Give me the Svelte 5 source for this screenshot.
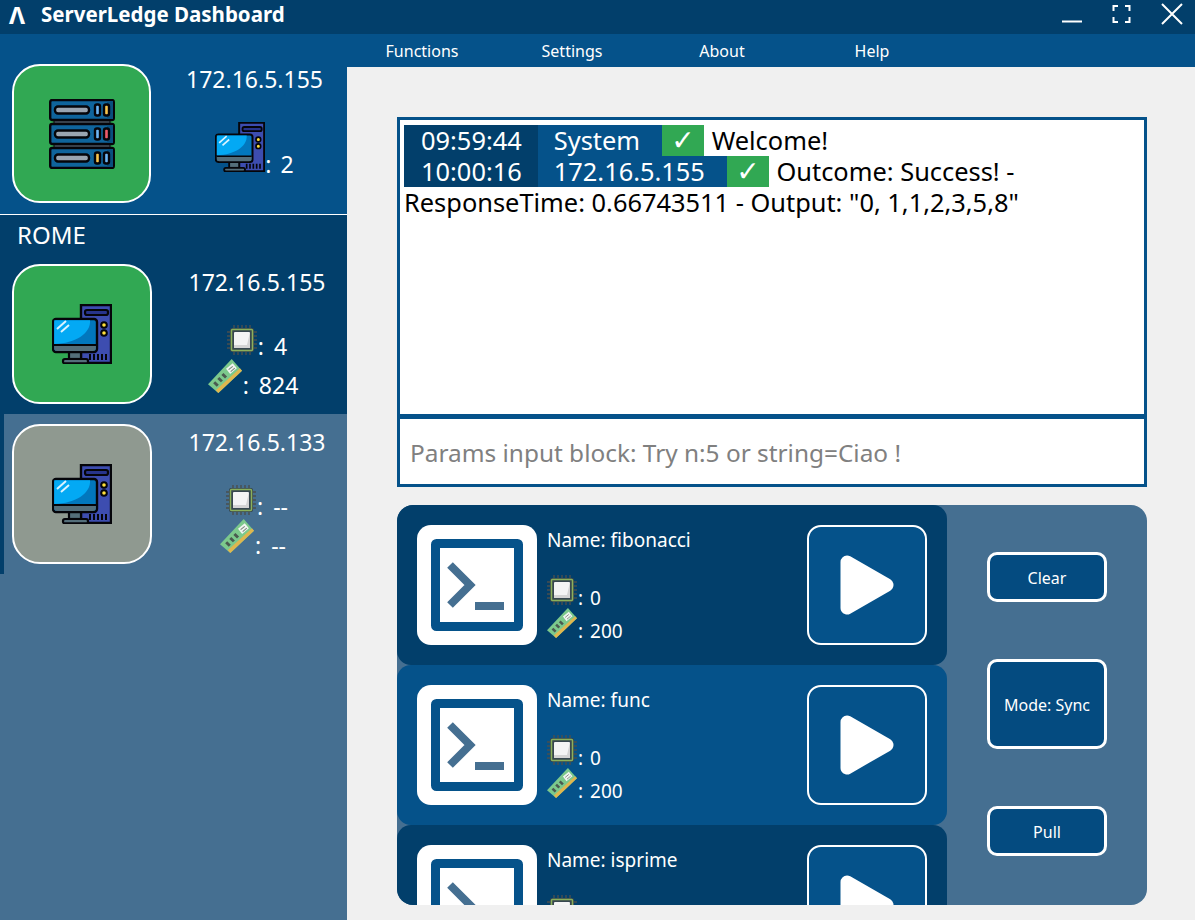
<script lang="ts">
	const menu = ['Functions', 'Settings', 'About', 'Help'];

	const nodes = [
		{ ip: '172.16.5.155', cpu: '4', mem: '824', online: true },
		{ ip: '172.16.5.133', cpu: '--', mem: '--', online: false }
	];

	const functions = [
		{ name: 'fibonacci', cpu: 0, mem: 200 },
		{ name: 'func', cpu: 0, mem: 200 },
		{ name: 'isprime', cpu: 0, mem: 200 }
	];

	const log = [
		{ time: '09:59:44', from: 'System', text: 'Welcome!' },
		{
			time: '10:00:16',
			from: '172.16.5.155',
			text: 'Outcome: Success! - ResponseTime: 0.66743511 - Output: "0, 1,1,2,3,5,8"'
		}
	];

	let params = $state('');
</script>

{#snippet computer(size: number)}
	<svg class="icon" width={size} height={size} viewBox="0 0 60 60" aria-hidden="true">
		<path d="M29 1h30v58H29z" fill="#3d4db0" stroke="#05050a" stroke-width="2.400" />
		<rect x="33" y="6" width="23" height="5" rx="2" fill="#27348b" stroke="#05050a" stroke-width="2.200" />
		<circle cx="52" cy="21" r="2.800" fill="#ffe03b" stroke="#05050a" stroke-width="2" />
		<circle cx="52" cy="29" r="2.800" fill="#ffe03b" stroke="#05050a" stroke-width="2" />
		<path d="M38 50v6M42 50v6M46 50v6M50 50v6M54 50v6" stroke="#05050a" stroke-width="2" />
		<rect x="17" y="47" width="12" height="8" fill="#546e7a" stroke="#05050a" stroke-width="2.200" />
		<rect x="11" y="55" width="25" height="4.400" rx="2" fill="#546e7a" stroke="#05050a" stroke-width="2.200" />
		<rect x="1" y="15" width="44" height="33" rx="3" fill="#0277bd" stroke="#05050a" stroke-width="2.400" />
		<path d="M2.200 16.200h35.800c1 13-14 23-35.800 23.800z" fill="#03a9f4" />
		<path d="M2.200 41h41.600v3a3 3 0 0 1-3 3H5.200a3 3 0 0 1-3-3z" fill="#546e7a" />
		<path d="M2 41h42" stroke="#05050a" stroke-width="1.800" />
		<path d="M5 25l9-8M9 28l8-7" stroke="#d9f3ff" stroke-width="2" />
	</svg>
{/snippet}

{#snippet rack()}
	<svg class="icon" width="66" height="70" viewBox="0 0 66 70" aria-hidden="true">
		<rect x="5" y="20" width="56" height="6" fill="#4a5560" stroke="#05050a" />
		<rect x="5" y="44" width="56" height="6" fill="#4a5560" stroke="#05050a" />
		{#each [{ y: 1, a: '#6db6f5', b: '#f8c54d' }, { y: 25, a: '#6db6f5', b: '#ef5b6c' }, { y: 49, a: '#f8c54d', b: '#6db6f5' }] as u}
			<rect x="1.200" y={u.y} width="63.600" height="20" rx="2" fill="#0f649c" stroke="#05050a" stroke-width="2.400" />
			<path d="M58 {u.y + 1}h6v18h-6z" fill="#0a4f7e" />
			<rect x="6" y={u.y + 6.500} width="34" height="7" rx="3" fill="#9aa5b1" stroke="#05050a" stroke-width="2.400" />
			<rect x="46" y={u.y + 4.500} width="5" height="11" rx="2" fill={u.a} stroke="#05050a" stroke-width="2.400" />
			<rect x="55" y={u.y + 4.500} width="5" height="11" rx="2" fill={u.b} stroke="#05050a" stroke-width="2.400" />
		{/each}
	</svg>
{/snippet}

{#snippet chip()}
	<svg class="icon" width="30" height="30" viewBox="0 0 30 30" aria-hidden="true">
		<path
			d="M0 7h30M0 11h30M0 15h30M0 19h30M0 23h30M7 0v30M11 0v30M15 0v30M19 0v30M23 0v30"
			stroke="#4a4f4f"
			stroke-width="1.400"
		/>
		<rect x="3" y="3" width="24" height="24" rx="2" fill="#37474f" />
		<rect x="4.500" y="4.500" width="21" height="21" rx="1" fill="#37474f" stroke="#8bb05a" stroke-width="1.500" />
		<rect x="7" y="7" width="16" height="16" rx="1" fill="#f4f4f4" />
		<path d="M7 20h13l3-13v16H7z" fill="#d4d4d4" />
	</svg>
{/snippet}

{#snippet ram(size: number)}
	<svg class="icon" width={size} height={size} viewBox="0 0 33 35" preserveAspectRatio="none" aria-hidden="true">
		<path d="M0 26L23 0l10 12-23 23z" fill="#7cc98c" />
		<path d="M33 12L10 35l-2.500-2.800L31 9.500z" fill="#e0b64e" />
		<path d="M17.500 10L24 4.500l4 5-6.500 6z" fill="#f1f4f1" />
		<path d="M20 11l4-3.500M22 13l4-3.500" stroke="#7a8a7a" />
		<path d="M6 24l3.500 3.500M10 19.500l3.500 3.500M14 15.500l3.500 3.500" stroke="#4a5a50" stroke-width="2.800" />
	</svg>
{/snippet}

{#snippet terminal()}
	<svg class="term" width="120" height="120" viewBox="0 0 120 120" aria-hidden="true">
		<rect width="120" height="120" rx="14" fill="#fff" />
		<rect x="18.500" y="18.500" width="83" height="83" rx="1" fill="#fff" stroke="#05528a" stroke-width="9" />
		<path d="M33 40l20 20-20 20" fill="none" stroke="#456f91" stroke-width="8" />
		<rect x="58" y="77" width="29" height="8" fill="#456f91" />
	</svg>
{/snippet}

{#snippet resources(cpu: string | number, mem: string | number, ramSize: number)}
	<div class="res">{@render chip()}<span>: {cpu}</span></div>
	<div class="res mem">{@render ram(ramSize)}<span>: {mem}</span></div>
{/snippet}

<div class="window">
	<header class="titlebar">
		<span class="logo">Λ</span>
		<span class="title">ServerLedge Dashboard</span>
		<div class="controls">
			<svg width="24" height="24" viewBox="0 0 24 24" aria-hidden="true">
				<path d="M2 19.500h20" stroke="#fff" stroke-width="2" />
			</svg>
			<svg width="24" height="24" viewBox="0 0 24 24" aria-hidden="true">
				<path
					d="M8 4H3.500v5M15 4h4.500v5M8 20H3.500v-5M15 20h4.500v-5"
					fill="none"
					stroke="#fff"
					stroke-width="2"
				/>
			</svg>
			<svg width="24" height="24" viewBox="0 0 24 24" aria-hidden="true">
				<path d="M2 2l20 20M22 2L2 22" stroke="#fff" stroke-width="2" />
			</svg>
		</div>
	</header>

	<div class="body">
		<aside class="sidebar">
			<section class="server">
				<div class="tile green">{@render rack()}</div>
				<div class="info">
					<div class="ip">172.16.5.155</div>
					<div class="count">{@render computer(50)}<span>: 2</span></div>
				</div>
			</section>

			<section class="group">
				<h2>ROME</h2>
				{#each nodes as node}
					<div class="node" class:offline={!node.online}>
						<div class="tile" class:green={node.online} class:grey={!node.online}>
							{@render computer(60)}
						</div>
						<div class="info">
							<div class="ip">{node.ip}</div>
							<div class="stats">{@render resources(node.cpu, node.mem, 34)}</div>
						</div>
					</div>
				{/each}
			</section>
		</aside>

		<div class="content">
			<nav class="menu">
				{#each menu as item}
					<span>{item}</span>
				{/each}
			</nav>

			<main>
				<div class="console">
					<div class="log">
						{#each log as entry}
							<div class="entry">
								<span class="time">{entry.time}</span><span class="from">{entry.from}</span><span
									class="check">✓</span
								>
								<span class="msg">{entry.text}</span>
							</div>
						{/each}
					</div>
					<input
						class="params"
						placeholder="Params input block: Try n:5 or string=Ciao !"
						bind:value={params}
					/>
				</div>

				<div class="panel">
					<div class="list">
						{#each functions as fn, i}
							<article class="fn" class:alt={i % 2 === 1}>
								{@render terminal()}
								<div class="fn-info">
									<div class="fn-name">Name: {fn.name}</div>
									{@render resources(fn.cpu, fn.mem, 30)}
								</div>
								<button class="play" aria-label="Run {fn.name}">
									<svg width="54" height="60" viewBox="0 0 54 60" aria-hidden="true">
										<path
											d="M7 7L47 30 7 53z"
											fill="#fff"
											stroke="#fff"
											stroke-width="13"
											stroke-linejoin="round"
										/>
									</svg>
								</button>
							</article>
						{/each}
					</div>
					<div class="actions">
						<button>Clear</button>
						<button class="tall">Mode: Sync</button>
						<button>Pull</button>
					</div>
				</div>
			</main>
		</div>
	</div>
</div>

<style>
	:global(body) {
		background: #f0f0f0;
	}

	.window {
		width: 1195px;
		height: 920px;
		display: flex;
		flex-direction: column;
		overflow: hidden;
		font-family: 'Noto Sans', 'Open Sans', sans-serif;
		color: #fff;
		background: #f0f0f0;
	}

	.icon {
		display: block;
		flex: none;
	}

	.titlebar {
		height: 34px;
		flex: none;
		display: flex;
		align-items: center;
		background: #023f6b;
		font-weight: 700;
	}

	.logo {
		width: 41px;
		padding: 0 0 6px 9px;
		box-sizing: border-box;
		font-size: 24px;
	}

	.title {
		padding-bottom: 6px;
		font-size: 20.500px;
	}

	.controls {
		margin-left: auto;
		align-self: flex-start;
		display: flex;
		gap: 26px;
		padding: 2px 11px 0 0;
	}

	.body {
		flex: 1;
		display: flex;
		min-height: 0;
	}

	.sidebar {
		width: 347px;
		flex: none;
		background: #456f91;
	}

	.server {
		height: 181px;
		box-sizing: border-box;
		padding: 30px 0 0 12px;
		display: flex;
		background: #05528a;
		border-bottom: 1px solid #fff;
	}

	.tile {
		width: 140px;
		height: 140px;
		flex: none;
		box-sizing: border-box;
		display: flex;
		align-items: center;
		justify-content: center;
		border: 2px solid #fff;
		border-radius: 28px;
	}

	.server .tile {
		width: 139px;
		height: 139px;
	}

	.green {
		background: #31a853;
	}

	.grey {
		background: #8f9990;
	}

	.info {
		flex: 1;
		display: flex;
		flex-direction: column;
		align-items: center;
	}

	.server .info {
		padding-left: 11px;
		margin-top: -1px;
	}

	.node .info {
		padding: 2px 0 0 15px;
	}

	.ip {
		font-size: 23px;
		line-height: 32px;
	}

	.count {
		display: flex;
		align-items: flex-end;
		margin-top: 27px;
		font-size: 23px;
		line-height: 28px;
		word-spacing: 3px;
	}

	.count span {
		margin-bottom: -6px;
	}

	.group {
		background: #023f6b;
	}

	h2 {
		margin: 0;
		height: 39px;
		padding: 4px 0 0 17px;
		box-sizing: border-box;
		font-size: 24px;
		line-height: 32px;
		font-weight: 400;
	}

	.node {
		height: 160px;
		box-sizing: border-box;
		padding: 10px 0 0 12px;
		display: flex;
	}

	.node.offline {
		background: #456f91;
		padding-left: 8px;
		border-left: 4px solid #023f6b;
	}

	.stats {
		margin-top: 27px;
		display: flex;
		flex-direction: column;
		align-items: center;
		font-size: 23px;
		line-height: 30px;
		word-spacing: 4px;
	}

	.res {
		display: flex;
		align-items: flex-end;
	}

	.res span {
		padding-left: 1px;
		margin-bottom: -6px;
	}

	.stats .mem {
		margin: 4px 8px 0 0;
	}

	.stats .mem span {
		margin-bottom: -7px;
	}

	.content {
		flex: 1;
		min-width: 0;
		display: flex;
		flex-direction: column;
	}

	.menu {
		height: 33px;
		flex: none;
		display: flex;
		align-items: center;
		background: #05528a;
		font-size: 16px;
	}

	.menu span {
		width: 150px;
		text-align: center;
	}

	main {
		flex: 1;
		min-height: 0;
		padding: 50px 48px 15px 50px;
		display: flex;
		flex-direction: column;
		gap: 18px;
	}

	.console {
		height: 370px;
		flex: none;
		box-sizing: border-box;
		display: flex;
		flex-direction: column;
		border: 3px solid #05528a;
		background: #fff;
	}

	.log {
		flex: 1;
		padding: 5px 4px;
		border-bottom: 5px solid #05528a;
		color: #000;
		font-size: 25.400px;
		line-height: 31px;
	}

	.time,
	.from,
	.check {
		display: inline-block;
		height: 31px;
		vertical-align: top;
		color: #fff;
		text-align: center;
	}

	.time {
		padding: 0 16px 0 17px;
		background: #023f6b;
	}

	.from {
		padding: 0 22px 0 16px;
		background: #05528a;
	}

	.check {
		width: 42px;
		background: #31a853;
		font-family: 'DejaVu Sans', sans-serif;
		font-size: 28px;
	}

	.msg {
		margin-left: 1px;
	}

	.params {
		height: 65px;
		flex: none;
		box-sizing: border-box;
		padding: 2px 10px 0;
		border: 0;
		outline: 0;
		background: #fff;
		font: inherit;
		font-size: 24.400px;
	}

	.params::placeholder {
		color: #808080;
		opacity: 1;
	}

	.panel {
		flex: 1;
		min-height: 0;
		display: flex;
		overflow: hidden;
		border-radius: 16px;
		background: #456f91;
	}

	.list {
		width: 550px;
		flex: none;
	}

	.fn {
		height: 160px;
		box-sizing: border-box;
		padding: 20px;
		display: flex;
		border-radius: 14px;
		background: #023f6b;
	}

	.fn.alt {
		background: #05528a;
	}

	.term {
		display: block;
		flex: none;
	}

	.fn-info {
		flex: 1;
		padding-left: 10px;
		font-size: 19px;
		line-height: 30px;
	}

	.fn-name {
		height: 50px;
	}

	.fn-info .res {
		word-spacing: 2px;
	}

	.fn-info .res span {
		margin-bottom: -8px;
	}

	.fn-info .mem {
		margin-top: 3px;
	}

	.play {
		width: 120px;
		height: 120px;
		padding: 0;
		display: flex;
		align-items: center;
		justify-content: center;
		border: 2px solid #fff;
		border-radius: 14px;
		background: #05528a;
	}

	.actions {
		flex: 1;
		padding-bottom: 2px;
		display: flex;
		flex-direction: column;
		align-items: center;
		justify-content: center;
		gap: 57px;
	}

	.actions button {
		width: 120px;
		height: 50px;
		padding: 1px 0 0;
		border: 3px solid #fff;
		border-radius: 10px;
		background: #044b80;
		color: #fff;
		font: inherit;
		font-size: 16px;
	}

	.actions button.tall {
		height: 90px;
	}
</style>
